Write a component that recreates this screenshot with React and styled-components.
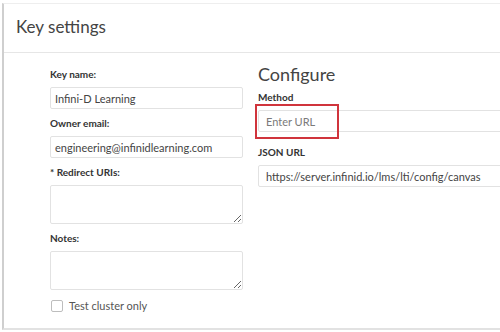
import React from 'react';
import styled, {createGlobalStyle} from 'styled-components';

const GlobalStyle = createGlobalStyle`
  html, body {
    margin: 0;
    padding: 0;
    background: #ffffff;
  }
  body {
    font-family: Lato, "Open Sans", "Liberation Sans", sans-serif;
    color: #333;
  }
`;

const App = () => {
    return (
        <Page>
            <GlobalStyle/>
            <Panel>
                <Header>Key settings</Header>
                <Body>
                    <LeftColumn>
                        <Field>
                            <Label>Key name:</Label>
                            <TextInput $pad={4} defaultValue="Infini-D Learning"/>
                        </Field>
                        <Field>
                            <Label>Owner email:</Label>
                            <TextInput $pad={4} defaultValue="engineering@infinidlearning.com"/>
                        </Field>
                        <Field>
                            <Label>* Redirect URIs:</Label>
                            <TextArea/>
                        </Field>
                        <Field>
                            <Label>Notes:</Label>
                            <TextArea/>
                        </Field>
                        <CheckRow>
                            <CheckBox/>
                            <span>Test cluster only</span>
                        </CheckRow>
                    </LeftColumn>
                    <RightColumn>
                        <Heading>Configure</Heading>
                        <Field>
                            <Label>Method</Label>
                            <Highlighted>
                                <TextInput placeholder="Enter URL"/>
                                <RedBox/>
                            </Highlighted>
                        </Field>
                        <Field $top={13}>
                            <Label>JSON URL</Label>
                            <TextInput defaultValue="https://server.infinid.io/lms/lti/config/canvas"/>
                        </Field>
                    </RightColumn>
                </Body>
            </Panel>
        </Page>
    );
};

const Page = styled.div`
  width: 500px;
  height: 332px;
  overflow: hidden;
`;

const Panel = styled.div`
  width: 620px;
  margin: 3px 0 0 2px;
  border-top: 1px solid #eeeeee;
  border-left: 2px solid #cfcfcf;
  border-bottom: 2px solid #e2e2e2;
  background: #fff;
`;

const Header = styled.div`
  padding: 12px 12px 14px;
  font-size: 17px;
  line-height: 22px;
  color: #444;
  border-bottom: 1px solid #e6e6e6;
`;

const Body = styled.div`
  display: grid;
  grid-template-columns: 193px 1fr;
  align-items: start;
  column-gap: 15px;
  padding: 10px 0 15px 46px;
`;

const LeftColumn = styled.div`
  display: flex;
  flex-direction: column;
  gap: 7px;
  padding-top: 4px;
`;

const RightColumn = styled.div`
  display: flex;
  flex-direction: column;
`;

const Heading = styled.h2`
  margin: 0 0 5px;
  font-size: 18px;
  line-height: 22px;
  font-weight: 400;
  color: #444;
`;

const Field = styled.div`
  display: flex;
  flex-direction: column;
  margin-top: ${p => p.$top || 0}px;
`;

const Label = styled.div`
  font-size: 10px;
  line-height: 14px;
  height: 14px;
  font-weight: 700;
  color: #333;
  margin-bottom: 6px;
`;

const TextInput = styled.input`
  display: block;
  box-sizing: border-box;
  width: 100%;
  height: 22px;
  margin: 0;
  padding: 0 ${p => p.$pad ?? 7}px;
  border: 1px solid #e2e2e2;
  border-radius: 2px;
  font-family: inherit;
  font-size: 11px;
  color: #444;
  background: #fff;
  outline: none;
  &::placeholder {
    color: #7a7a7a;
  }
`;

const TextArea = styled.textarea`
  display: block;
  box-sizing: border-box;
  width: 100%;
  height: 39px;
  margin: 0;
  padding: 4px;
  border: 1px solid #e2e2e2;
  border-radius: 2px;
  font-family: inherit;
  font-size: 11px;
  resize: vertical;
  outline: none;
`;

const Highlighted = styled.div`
  position: relative;
`;

const RedBox = styled.div`
  position: absolute;
  left: -3px;
  top: -6px;
  width: 84px;
  height: 35px;
  box-sizing: border-box;
  border: 2px solid #d0343c;
  pointer-events: none;
`;

const CheckRow = styled.div`
  display: flex;
  align-items: center;
  gap: 6px;
  margin-top: 2px;
  font-size: 11px;
  line-height: 14px;
  color: #555;
`;

const CheckBox = styled.span`
  display: inline-block;
  width: 12px;
  height: 12px;
  box-sizing: border-box;
  border: 1px solid #bdbdbd;
  border-radius: 2px;
  margin-left: 1px;
`;

export default App;
